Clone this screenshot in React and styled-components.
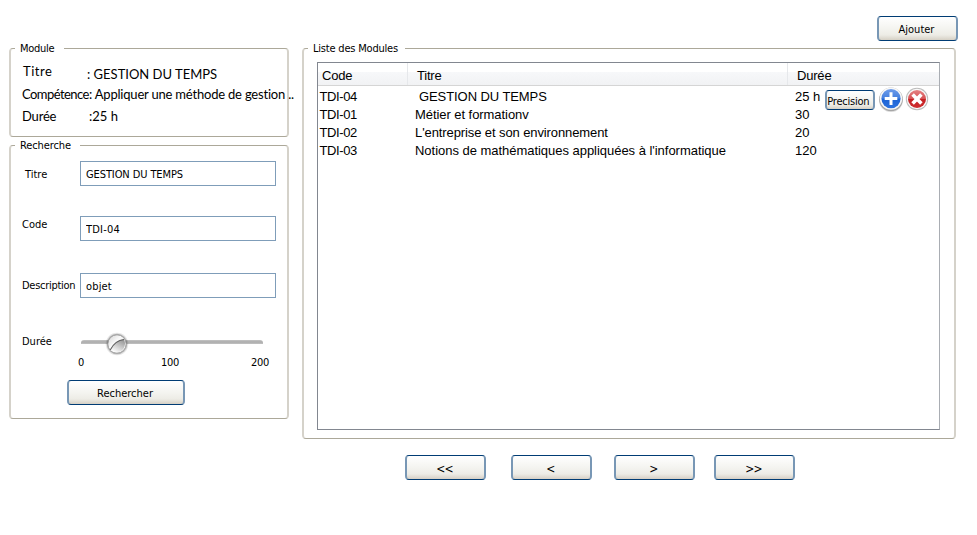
import React from "react";
import styled, { createGlobalStyle } from "styled-components";

const GlobalStyle = createGlobalStyle`
  * { box-sizing: border-box; }
  body {
    margin: 0;
    background: #fff;
    color: #000;
    font-family: Tahoma, "DejaVu Sans Condensed", "DejaVu Sans", sans-serif;
    font-size: 11px;
    line-height: 14px;
  }
`;

const Page = styled.div`
  width: 977px;
  height: 535px;
  overflow: hidden;
  padding: 16px 19px 0 9px;
`;

const TopBar = styled.header`
  display: flex;
  justify-content: flex-end;
  height: 32px;
`;

const Columns = styled.main`
  display: grid;
  grid-template-columns: 280px 654px;
  column-gap: 13px;
  align-items: start;
`;

const Sidebar = styled.div`
  display: flex;
  flex-direction: column;
  gap: 8px;
`;

const Panel = styled.section`
  position: relative;
  height: ${(p) => p.$height}px;
  border: solid;
  border-width: 1px 2px;
  border-color: #aca899 #d5d2ca;
  border-radius: 4px;
`;

const Legend = styled.h2`
  position: absolute;
  top: -7px;
  left: 4px;
  margin: 0;
  padding-left: 5px;
  width: ${(p) => p.$width}px;
  background: #fff;
  font-size: 11px;
  font-weight: normal;
  white-space: nowrap;
  letter-spacing: ${(p) => p.$spacing ?? 0}px;
`;

const Details = styled.dl`
  margin: 0;
  padding: 13px 0 0 11px;
  font-family: "Comic Sans MS", Lato, sans-serif;
  font-size: 13px;
  line-height: 18px;
`;

const Detail = styled.div`
  display: flex;
  height: ${(p) => p.$height}px;
`;

const Term = styled.dt`
  flex: none;
  width: ${(p) => p.$width}px;
  padding-left: ${(p) => p.$indent ?? 0}px;
  white-space: nowrap;
  letter-spacing: ${(p) => p.$spacing}px;
`;

const Value = styled.dd`
  margin: ${(p) => p.$drop ?? 0}px 0 0;
  white-space: nowrap;
  letter-spacing: ${(p) => p.$spacing}px;
`;

const Form = styled.form`
  padding: 15px 0 0 11px;
`;

const Field = styled.label`
  display: grid;
  grid-template-columns: 58px 196px;
  height: ${(p) => p.$height}px;
`;

const FieldLabel = styled.span`
  padding-top: ${(p) => p.$drop}px;
  padding-left: ${(p) => p.$indent ?? 0}px;
  letter-spacing: ${(p) => p.$spacing ?? 0}px;
  white-space: nowrap;
`;

const Input = styled.input`
  width: 196px;
  height: 25px;
  padding: 2px 5px 0;
  border: 1px solid #7f9db9;
  border-radius: 0;
  outline: none;
  background: #fff;
  color: #000;
  font: inherit;
  letter-spacing: ${(p) => p.$spacing}px;
`;

const Slider = styled.div`
  display: flex;
  flex-direction: column;
`;

const Track = styled.div`
  display: flex;
  align-items: center;
  width: 182px;
  height: 4px;
  margin: 10px 0 0 1px;
  padding-left: 24px;
  border-radius: 3px 3px 0 0;
  background: linear-gradient(#c4c4c4, #acacac 50%, #c2c2c2);
`;

const Knob = styled.svg`
  flex: none;
  width: 24px;
  height: 24px;
  margin-top: 3px;
`;

const Ticks = styled.div`
  display: grid;
  grid-template-columns: 83px 90px 18px;
  margin: 12px 0 0 -2px;
  letter-spacing: -0.3px;
`;

const Button = styled.button`
  display: flex;
  align-items: center;
  justify-content: center;
  width: ${(p) => p.$width}px;
  height: 25px;
  padding: 2px 2px 0 0;
  border: solid;
  border-width: 1px 2px;
  border-color: #003c74 #7897b5;
  border-radius: 4px;
  background: linear-gradient(#fff, #f4f4f0 50%, #edece6 78%, #d6d0c5);
  color: #000;
  font: inherit;
  white-space: nowrap;
`;

const SearchButton = styled(Button)`
  margin-left: 45px;
`;

const SmallButton = styled(Button)`
  height: 20px;
  padding-top: 3px;
  padding-right: 4px;
  letter-spacing: -0.22px;
`;

const Table = styled.div`
  width: 623px;
  height: 368px;
  margin: 13px 0 0 13px;
  border: 1px solid #828790;
  border-right-color: #a9adb3;
  font-family: "Liberation Sans", Arial, sans-serif;
  font-size: 13px;
  line-height: 18px;
`;

const HeaderRow = styled.div`
  display: grid;
  grid-template-columns: 90px 380px 1fr;
  height: 23px;
  margin-bottom: 2px;
  border-bottom: 1px solid #d5d5d5;
  background: linear-gradient(#fff 9px, #f7f8fa 9px, #f1f2f4);
`;

const HeaderCell = styled.div`
  padding: 4px 0 0 ${(p) => p.$indent}px;
  border-right: ${(p) => (p.$divider ? "1px solid #e6e8eb" : "0")};
  letter-spacing: -0.2px;
`;

const Row = styled.div`
  display: grid;
  grid-template-columns: 95.5px 380px 1fr;
  height: 18px;
  padding-left: 1.5px;
`;

const Cell = styled.div`
  display: flex;
  align-items: flex-start;
  padding-left: ${(p) => p.$indent ?? 0}px;
  white-space: nowrap;
  letter-spacing: ${(p) => p.$spacing ?? 0}px;
`;

const Actions = styled.div`
  display: flex;
  align-items: flex-start;
  margin: 2px 0 0 5px;
  font: 11px / 14px Tahoma, "DejaVu Sans Condensed", "DejaVu Sans", sans-serif;
`;

const ActionIcon = styled.svg`
  flex: none;
  width: 26px;
  height: 26px;
  margin: -4px 0 0 ${(p) => p.$gap}px;
`;

const Pager = styled.nav`
  display: flex;
  margin: 16px 0 0 103px;
`;

const PageButton = styled(Button)`
  margin-right: ${(p) => p.$gap}px;
  font-size: 12px;
  letter-spacing: -0.7px;
`;

const modules = [
  { code: "TDI-04", title: "GESTION DU TEMPS", duration: "25 h", indent: 4, spacing: -0.08, active: true },
  { code: "TDI-01", title: "Métier et formationv", duration: "30", spacing: -0.06 },
  { code: "TDI-02", title: "L'entreprise et son environnement", duration: "20", spacing: -0.1 },
  { code: "TDI-03", title: "Notions de mathématiques appliquées à l'informatique", duration: "120", spacing: -0.03 },
];

const pages = [
  { label: "<<", gap: 25 },
  { label: "<", gap: 22 },
  { label: ">", gap: 19 },
  { label: ">>", gap: 0 },
];

function SliderKnob() {
  return (
    <Knob viewBox="0 0 24 24">
      <defs>
        <linearGradient id="knob" x1="0" y1="0" x2="1" y2="1">
          <stop offset="0" stopColor="#d2d2d2" />
          <stop offset="0.4" stopColor="#f8f8f8" />
          <stop offset="1" stopColor="#ececec" />
        </linearGradient>
        <linearGradient id="shade" x1="1" y1="0" x2="0.4" y2="1">
          <stop offset="0" stopColor="#8c8c8c" />
          <stop offset="1" stopColor="#fafafa" />
        </linearGradient>
      </defs>
      <circle cx="12" cy="12" r="11.3" fill="#000" opacity=".1" />
      <circle cx="12" cy="12" r="10.3" fill="#000" opacity=".2" />
      <circle cx="12" cy="12" r="9.2" fill="url(#knob)" stroke="#999" strokeWidth="0.9" />
      <path d="M5.2 18C8.2 11.5 12 8 19.2 7.5Q21.5 14 17 18.3Q11 22.5 5.2 18Z" fill="url(#shade)" />
      <path d="M5.2 18C8.5 11.5 12 8.2 19 7.5" fill="none" stroke="#606060" strokeWidth="1.1" />
    </Knob>
  );
}

function AddIcon() {
  return (
    <ActionIcon $gap={3} viewBox="0 0 26 26">
      <defs>
        <linearGradient id="blue" x1="0" y1="0" x2="0" y2="1">
          <stop offset="0" stopColor="#6c9bea" />
          <stop offset="0.48" stopColor="#4580df" />
          <stop offset="0.52" stopColor="#1c63d5" />
          <stop offset="1" stopColor="#2c72df" />
        </linearGradient>
      </defs>
      <circle cx="13" cy="13.9" r="12" fill="#000" opacity=".16" />
      <circle cx="13" cy="13.3" r="11.8" fill="#8c8c8c" opacity=".65" />
      <circle cx="13" cy="12.6" r="11.2" fill="#f7f7f7" />
      <circle cx="13" cy="12.6" r="9.6" fill="url(#blue)" />
      <path d="M13 6.3V18.9M6.7 12.6H19.3" stroke="#fff" strokeWidth="3" />
    </ActionIcon>
  );
}

function DeleteIcon() {
  return (
    <ActionIcon $gap={0} viewBox="0 0 26 26">
      <defs>
        <linearGradient id="red" x1="0" y1="0" x2="0" y2="1">
          <stop offset="0" stopColor="#e58384" />
          <stop offset="0.48" stopColor="#d65355" />
          <stop offset="0.52" stopColor="#c51f22" />
          <stop offset="1" stopColor="#cf3032" />
        </linearGradient>
      </defs>
      <circle cx="13" cy="13" r="11.2" fill="#bcbcbc" />
      <circle cx="13" cy="13" r="10.2" fill="#fafafa" />
      <circle cx="13" cy="13" r="9" fill="url(#red)" />
      <path d="M8.6 8.6L17.4 17.4M17.4 8.6L8.6 17.4" stroke="#fff" strokeWidth="3.6" />
    </ActionIcon>
  );
}

export default function App() {
  return (
    <Page>
      <GlobalStyle />
      <TopBar>
        <Button $width={81}>Ajouter</Button>
      </TopBar>
      <Columns>
        <Sidebar>
          <Panel $height={89}>
            <Legend $width={49} $spacing={-0.3}>Module</Legend>
            <Details>
              <Detail $height={23}>
                <Term $width={65} $indent={1} $spacing={0.5}>Titre</Term>
                <Value $drop={3} $spacing={0}>: GESTION DU TEMPS</Value>
              </Detail>
              <Detail $height={22}>
                <Term $width={67} $spacing={-0.55}>Compétence</Term>
                <Value $spacing={-0.2}>: Appliquer une méthode de gestion ..</Value>
              </Detail>
              <Detail $height={18}>
                <Term $width={67} $spacing={-0.2}>Durée</Term>
                <Value $spacing={0}>:25 h</Value>
              </Detail>
            </Details>
          </Panel>
          <Panel $height={274}>
            <Legend $width={65} $spacing={-0.1}>Recherche</Legend>
            <Form onSubmit={(e) => e.preventDefault()}>
              <Field $height={55}>
                <FieldLabel $drop={7} $indent={3}>Titre</FieldLabel>
                <Input $spacing={-0.1} defaultValue="GESTION DU TEMPS" />
              </Field>
              <Field $height={57}>
                <FieldLabel $drop={2}>Code</FieldLabel>
                <Input $spacing={0.2} defaultValue="TDI-04" />
              </Field>
              <Field $height={57}>
                <FieldLabel $drop={6} $spacing={-0.28}>Description</FieldLabel>
                <Input $spacing={0.15} defaultValue="objet" />
              </Field>
              <Field as="div" $height={50}>
                <FieldLabel $drop={5}>Durée</FieldLabel>
                <Slider>
                  <Track>
                    <SliderKnob />
                  </Track>
                  <Ticks>
                    <span>0</span>
                    <span>100</span>
                    <span>200</span>
                  </Ticks>
                </Slider>
              </Field>
              <SearchButton type="submit" $width={118}>Rechercher</SearchButton>
            </Form>
          </Panel>
        </Sidebar>
        <div>
          <Panel $height={391}>
            <Legend $width={97} $spacing={-0.2}>Liste des Modules</Legend>
            <Table>
              <HeaderRow>
                <HeaderCell $indent={4} $divider>Code</HeaderCell>
                <HeaderCell $indent={9} $divider>Titre</HeaderCell>
                <HeaderCell $indent={9}>Durée</HeaderCell>
              </HeaderRow>
              {modules.map((m) => (
                <Row key={m.code}>
                  <Cell $spacing={-0.4}>{m.code}</Cell>
                  <Cell $indent={m.indent} $spacing={m.spacing}>{m.title}</Cell>
                  <Cell>
                    {m.duration}
                    {m.active && (
                      <Actions>
                        <SmallButton $width={50}>Precision</SmallButton>
                        <AddIcon />
                        <DeleteIcon />
                      </Actions>
                    )}
                  </Cell>
                </Row>
              ))}
            </Table>
          </Panel>
          <Pager>
            {pages.map((p) => (
              <PageButton key={p.label} $width={81} $gap={p.gap}>
                {p.label}
              </PageButton>
            ))}
          </Pager>
        </div>
      </Columns>
    </Page>
  );
}
